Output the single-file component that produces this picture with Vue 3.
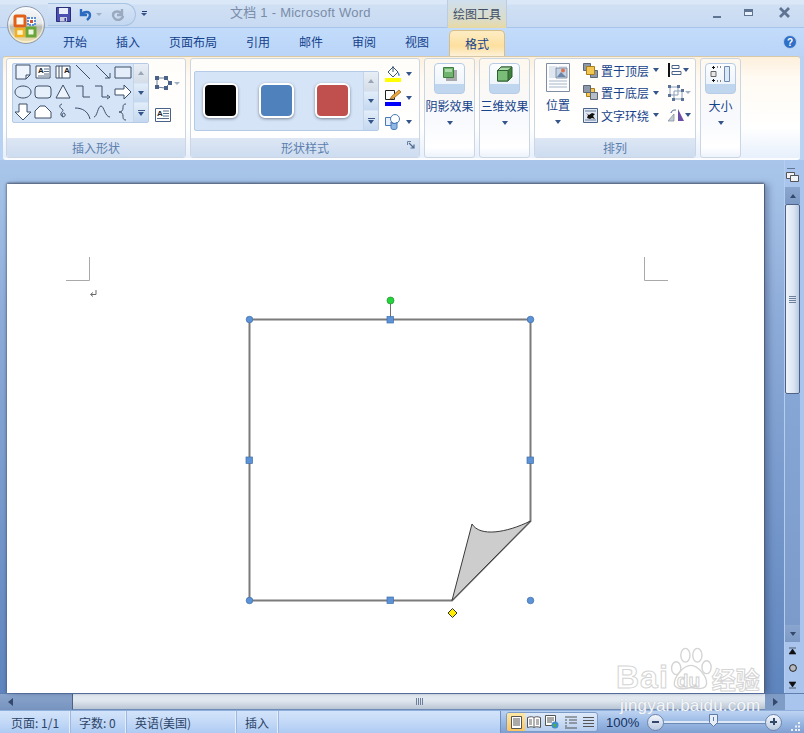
<script setup>
const tabs = ["开始", "插入", "页面布局", "引用", "邮件", "审阅", "视图"];

// shape gallery, drawn on a 20x20 box
const shapes = [
  { d: "M3 3h14v10l-4 4H3z M13 17v-4h4", fill: "#eef4fc" },
  { d: "M3 4h14v12H3z", fill: "#fff", label: "A" },
  { d: "M3 4h14v12H3z M6 4v12 M9 4v12", fill: "#fff", label: "A", labelX: 11 },
  { d: "M3 3l14 14" },
  { d: "M3 3l13 13 M12 16h5v-5", arrow: true },
  { d: "M2 5h16v11H2z", fill: "#e4eefa" },
  { d: "M10 4c4.500 0 8 2.700 8 6s-3.500 6-8 6-8-2.700-8-6 3.500-6 8-6z", fill: "#dce9f8" },
  { d: "M5 4h10q3 0 3 3v6q0 3-3 3H5q-3 0-3-3V7q0-3 3-3z", fill: "#e6f0fb" },
  { d: "M10 3l7 13H3z", fill: "#eef4fc" },
  { d: "M3 4h7v11h7" },
  { d: "M2 4h7v11h6 M14 13l3 2-3 2", arrow: true },
  { d: "M2 7h9V3l7 7-7 7v-4H2z", fill: "#fff" },
  { d: "M6 2h8v8h4l-8 8-8-8h4z", fill: "#fff" },
  { d: "M7 4h5l6 6v6H2v-7z", fill: "#fff" },
  { d: "M9 2c-3 1-3 3 0 5 3 2-2 3-1 6 1 3 5 2 4-1-1-2-4-1-2 3" },
  { d: "M2 6c7 0 13 3 15 11" },
  { d: "M1 15c3 0 4-11 7-11s4 11 9 11" },
  { d: "M13 2c-3 0-3 2-3 4s-1 4-4 4c3 0 4 2 4 4s0 4 3 4" },
];
</script>

<template>
  <div class="app">
    <!-- office button -->
    <svg class="orb" viewBox="0 0 40 40" width="40" height="40">
      <defs>
        <linearGradient id="orbBg" x1="0" y1="0" x2="0" y2="1">
          <stop offset="0" stop-color="#f7f8fa" />
          <stop offset="0.45" stop-color="#e6e8ea" />
          <stop offset="0.55" stop-color="#b9bab2" />
          <stop offset="1" stop-color="#f8e4a8" />
        </linearGradient>
      </defs>
      <circle cx="20" cy="20" r="18.500" fill="url(#orbBg)" stroke="#8f9cb0" />
      <circle cx="20" cy="20" r="17" fill="none" stroke="#fff" stroke-opacity="0.7" />
      <rect x="9" y="11" width="10" height="10" rx="1" fill="#fff8ee" stroke="#e0601a" stroke-width="3" />
      <rect x="22" y="13" width="7" height="7" fill="#fff" stroke="#5a90d8" stroke-width="2" stroke-dasharray="2 1" />
      <rect x="24" y="15" width="3" height="3" fill="#d9503a" />
      <rect x="10" y="24" width="8" height="7" fill="#fff4c8" stroke="#f0b020" stroke-width="2.500" />
      <rect x="21" y="23" width="8" height="8" fill="#eef6e0" stroke="#6aa53a" stroke-width="3" />
    </svg>

    <header class="titlebar">
      <div class="qat">
        <svg width="15" height="15" viewBox="0 0 15 15">
          <path d="M.5.500h14v14H.5z" fill="#4a4fb0" stroke="#2b2d78" />
          <path d="M3 1h9v6H3z" fill="#e8eefc" />
          <path d="M4 10h7v4.500H4z" fill="#c8cce0" />
          <path d="M8.500 11h1.500v3H8.500z" fill="#35388a" />
        </svg>
        <svg class="undo" width="14" height="14" viewBox="0 0 14 14">
          <path d="M3 2v6h6M3.500 7.500C6 4 12 4 12 8c0 2-1 3.500-3 5" fill="none" stroke="#2b6cc0" stroke-width="2.400" />
        </svg>
        <i class="arrow small grey"></i>
        <svg class="redo" width="14" height="14" viewBox="0 0 14 14">
          <path d="M11 2v6H6M10.500 7.500C9 3 2 4 2 8c0 3 3 5 5 5s5-2 5-4" fill="none" stroke="#9aa9bd" stroke-width="2.400" />
        </svg>
      </div>
      <div class="qat-more"><b></b><i class="arrow small navy"></i></div>
      <div class="doc-title">文档 1 - Microsoft Word</div>
      <div class="context-tab">绘图工具</div>
      <div class="winbtns">
        <span class="win-min"></span>
        <span class="win-max"></span>
        <svg class="win-close" width="13" height="11" viewBox="0 0 13 11">
          <path d="M2 1l9 9M11 1l-9 9" stroke="#5f7492" stroke-width="2.800" />
        </svg>
      </div>
    </header>

    <nav class="tabs">
      <span v-for="t in tabs" :key="t" class="tab">{{ t }}</span>
      <span class="tab tab-active">格式</span>
      <svg class="help" width="14" height="14" viewBox="0 0 14 14">
        <circle cx="7" cy="7" r="6.500" fill="#2f6fc8" stroke="#bcd0ea" />
        <text x="7" y="11" text-anchor="middle" class="help-q">?</text>
      </svg>
    </nav>

    <section class="ribbon">
      <div class="group g-insert">
        <div class="group-body">
          <div class="gallery shapes-gal">
            <div class="shape-grid">
              <svg v-for="(s, i) in shapes" :key="i" width="20" height="20" viewBox="0 0 20 20">
                <path :d="s.d" :fill="s.fill || 'none'" stroke="#3c4f68" stroke-width="1" />
                <text v-if="s.label" :x="s.labelX || 5" y="11" class="shape-a">{{ s.label }}</text>
                <path v-if="s.label && !s.labelX" d="M11 7h5M11 9.500h5M11 12h5M5 14h11" stroke="#5a6d88" />
              </svg>
            </div>
            <div class="gal-scroll">
              <span class="up off"><i class="arrow up-arrow"></i></span>
              <span><i class="arrow navy"></i></span>
              <span class="more"><b></b><i class="arrow navy"></i></span>
            </div>
          </div>
          <div class="side-col">
            <span class="edit-shape">
              <svg width="17" height="16" viewBox="0 0 17 16">
                <path d="M2 3l9 0 4 5-5 5-8-1z" fill="none" stroke="#6d7f99" />
                <path d="M0 1h4v4H0zM9 1h4v4H9zM9 11h4v4H9zM0 10h4v4H0zM13 6h4v4h-4z" fill="#4a6288" />
              </svg>
              <i class="arrow small grey"></i>
            </span>
            <svg width="16" height="14" viewBox="0 0 16 14">
              <path d="M.500.500h15v13H.500z" fill="#fff" stroke="#4a6288" />
              <text x="2" y="8" class="shape-a">A</text>
              <path d="M8 3h6M8 5.500h6M8 8h6M2 10.500h12" stroke="#5a6d88" />
            </svg>
          </div>
        </div>
        <div class="group-label">插入形状</div>
      </div>

      <div class="group g-style">
        <div class="group-body">
          <div class="gallery style-gal">
            <div class="swatches">
              <span class="swatch black"></span>
              <span class="swatch blue"></span>
              <span class="swatch red"></span>
            </div>
            <div class="gal-scroll">
              <span class="up off"><i class="arrow up-arrow"></i></span>
              <span><i class="arrow navy"></i></span>
              <span class="more"><b></b><i class="arrow navy"></i></span>
            </div>
          </div>
          <div class="style-tools">
            <div class="tool">
              <svg width="16" height="17" viewBox="0 0 16 17">
                <path d="M3 7l5-5 5 5-5 5z" fill="#fff" stroke="#3d5675" />
                <path d="M8 1v6" stroke="#3d5675" />
                <path d="M13 7c2 2 2 4 1 4s-1-2-1-4z" fill="#3b77c9" />
                <path d="M0 13h16v4H0z" fill="#ffff00" />
              </svg>
              <i class="arrow navy"></i>
            </div>
            <div class="tool">
              <svg width="16" height="17" viewBox="0 0 16 17">
                <path d="M.500 1.500h9v9h-9z" fill="#fff" stroke="#222" />
                <path d="M5 10l2-3 7-6 2 2-7 6z" fill="#eba83a" stroke="#8a5a14" stroke-width="0.700" />
                <path d="M0 13h16v4H0z" fill="#0000ff" />
              </svg>
              <i class="arrow navy"></i>
            </div>
            <div class="tool">
              <svg width="16" height="16" viewBox="0 0 16 16">
                <path d="M.500 3.500h8v8h-8z" fill="#e8f0fb" stroke="#4a7ab5" />
                <circle cx="10" cy="5" r="4.500" fill="#fff" stroke="#4a7ab5" />
                <path d="M6 8v6c0 2 6 2 6 0V8c0 2-6 2-6 0z" fill="#8fb8e6" stroke="#4a7ab5" />
              </svg>
              <i class="arrow navy"></i>
            </div>
          </div>
        </div>
        <div class="group-label">
          形状样式
          <svg class="launcher" width="8" height="8" viewBox="0 0 8 8">
            <path d="M.500 4V.500H4" fill="none" stroke="#6a829f" />
            <path d="M2 2l5 5M7 3.500V7H3.500" fill="none" stroke="#4d6a8f" stroke-width="1.200" />
          </svg>
        </div>
      </div>

      <div class="group g-tall">
        <div class="big-btn">
          <div class="big-icon">
            <svg width="14" height="14" viewBox="0 0 14 14">
              <path d="M3 3h11v11H3z" fill="#777" opacity="0.6" />
              <path d="M.500.500h10v10H.500z" fill="#6fb36f" stroke="#3e7d3e" />
              <path d="M2 2h7v3H2z" fill="#a9d8a9" />
            </svg>
          </div>
        </div>
        <span class="big-label">阴影效果</span>
        <i class="arrow navy"></i>
      </div>

      <div class="group g-tall">
        <div class="big-btn">
          <div class="big-icon">
            <svg width="16" height="16" viewBox="0 0 16 16">
              <path d="M.500 4.500L4 1h11v10l-4 4H.500z" fill="#3f7f3f" stroke="#2e5f2e" />
              <path d="M.500 4.500h10.500V15H.500z" fill="#79bd79" stroke="#2e5f2e" />
              <path d="M.500 4.500L4 1h11l-4 3.500z" fill="#a9d8a9" stroke="#2e5f2e" />
            </svg>
          </div>
        </div>
        <span class="big-label">三维效果</span>
        <i class="arrow navy"></i>
      </div>

      <div class="group g-arrange">
        <div class="group-body arrange-body">
          <div class="pos-col">
            <svg width="24" height="29" viewBox="0 0 24 29">
              <path d="M.500.500h23v28H.500z" fill="#fdfdff" stroke="#7f8ea3" />
              <path d="M3 18h18M3 21h18M3 24h18" stroke="#a8b5c6" />
              <path d="M3 3h8v12H3z M13 3h8v2h-8z M13 7h8v2h-8z" fill="#dfe6ef" />
              <path d="M10 5h11v10H10z" fill="#c3d3e6" stroke="#6f7f96" stroke-width="0.800" />
              <path d="M11 14l4-5 5 5z" fill="#6c84a6" />
              <circle cx="17" cy="7.500" r="2" fill="#e0704c" />
            </svg>
            <span class="big-label">位置</span>
            <i class="arrow navy"></i>
          </div>
          <div class="arr-col">
            <div class="arr-row">
              <svg width="15" height="15" viewBox="0 0 15 15">
                <path d="M.500.500h7v7h-7z" fill="#8d99a8" stroke="#5c6775" />
                <path d="M7.500 7.500h7v7h-7z" fill="#8d99a8" stroke="#5c6775" />
                <path d="M3.500 3.500h8v8h-8z" fill="#f3c652" stroke="#a87d1a" />
              </svg>
              <span>置于顶层</span><i class="arrow navy"></i>
            </div>
            <div class="arr-row">
              <svg width="15" height="15" viewBox="0 0 15 15">
                <path d="M3.500 3.500h8v8h-8z" fill="#f3c652" stroke="#a87d1a" />
                <path d="M.500.500h7v7h-7z" fill="#8d99a8" stroke="#5c6775" />
                <path d="M7.500 7.500h7v7h-7z" fill="#b4bdc8" stroke="#5c6775" />
              </svg>
              <span>置于底层</span><i class="arrow navy"></i>
            </div>
            <div class="arr-row">
              <svg width="15" height="15" viewBox="0 0 15 15">
                <path d="M.500.500h14v14H.500z" fill="#dfe8f3" stroke="#4a6288" />
                <path d="M2 3h11M2 12h11" stroke="#6a7f9c" />
                <path d="M3 5l3 2 3-2 3 1-2 2 2 3-3-1-2 1-3-1 1-3z" fill="#111" />
              </svg>
              <span>文字环绕</span><i class="arrow navy"></i>
            </div>
          </div>
          <div class="arr-tools">
            <div class="arr-row">
              <svg width="14" height="14" viewBox="0 0 14 14">
                <path d="M1 0v14" stroke="#111" stroke-width="2" />
                <path d="M4 2.500h7v3H4zM4 8.500h9v3H4z" fill="#fff" stroke="#4a6288" />
              </svg>
              <i class="arrow navy"></i>
            </div>
            <div class="arr-row">
              <svg width="16" height="16" viewBox="0 0 16 16">
                <path d="M2 2h8v8H2zM6 6h8v8H6z" fill="none" stroke="#8ba0bb" />
                <path d="M0 0h3v3H0zM9 0h3v3H9zM0 9h3v3H0zM13 4h3v3h-3zM13 13h3v3h-3zM4 13h3v3H4z" fill="#5a7396" />
              </svg>
              <i class="arrow small grey"></i>
            </div>
            <div class="arr-row">
              <svg width="16" height="14" viewBox="0 0 16 14">
                <path d="M0 13L6 6v7z" fill="#c6ccd4" stroke="#7d8897" stroke-width="0.700" />
                <path d="M10 1v12h6z" fill="#6b4ea5" />
                <path d="M3 5c1-3 3-3 5-3" fill="none" stroke="#3f5f8f" />
              </svg>
              <i class="arrow navy"></i>
            </div>
          </div>
        </div>
        <div class="group-label">排列</div>
      </div>

      <div class="group g-tall g-size">
        <div class="big-btn">
          <div class="big-icon">
            <svg width="22" height="16" viewBox="0 0 22 16">
              <path d="M14.500.500h5v15h-5z" fill="#dbe9f8" stroke="#6f8cb0" />
              <path d="M1 5.500h5v5H1z" fill="#e7e7e7" stroke="#666" />
              <path d="M3.500 0v3M2 1.500h3M3.500 13v3M2 14.500h3" stroke="#111" />
              <path d="M7 1h5M7 15h5" stroke="#111" stroke-dasharray="1 2" />
            </svg>
          </div>
        </div>
        <span class="big-label">大小</span>
        <i class="arrow navy"></i>
      </div>
    </section>

    <main class="workspace">
      <div class="page">
        <svg class="canvas" viewBox="7 184 757 509" width="757" height="509">
          <path d="M66 280.500h23.500V257M644.500 257v23.500H668" fill="none" stroke="#a9a9a9" />
          <path d="M96 290v4.500h-5M93 292.500l-2.500 2 2.500 2" fill="none" stroke="#6a6a6a" />

          <path d="M249.500 319.500H530.500V521L452 600.500H249.500z" fill="#fff" stroke="#7b7b7b" stroke-width="2" />
          <path d="M452 600.500L472 524C480 537 506 533 530.500 521z" fill="#cdcdcd" stroke="#3a3a3a" />

          <path d="M390.500 300v19" stroke="#6f6f6f" />
          <circle cx="390.500" cy="300.500" r="3.500" fill="#22d63a" stroke="#2a8a3a" stroke-width="0.700" />
          <g fill="#5c92d8" stroke="#3f6fa8" stroke-width="0.700">
            <circle cx="249.500" cy="319.500" r="3.300" />
            <circle cx="530.500" cy="319.500" r="3.300" />
            <circle cx="249.500" cy="600.500" r="3.300" />
            <circle cx="530.500" cy="600.500" r="3.300" />
            <rect x="387" y="316.500" width="6.500" height="6.500" />
            <rect x="387" y="597" width="6.500" height="6.500" />
            <rect x="246" y="457" width="6.500" height="6.500" />
            <rect x="527" y="457" width="6.500" height="6.500" />
          </g>
          <path d="M452.500 608.500l4.500 4.500-4.500 4.500-4.500-4.500z" fill="#ffee00" stroke="#333" />
        </svg>
      </div>
      <aside class="vscroll">
        <svg class="ruler" width="13" height="15" viewBox="0 0 13 15">
          <path d="M1 0h8" stroke="#3f5676" stroke-width="1.400" />
          <path d="M.500 4.500h8v6h-8z" fill="#f1f3f6" stroke="#555" />
          <path d="M4.500 7.500h8v6h-8z" fill="#f1f3f6" stroke="#555" />
        </svg>
        <span class="vbtn"><i class="arrow up-arrow dark"></i></span>
        <div class="vthumb"><b></b></div>
        <div class="vtrack"></div>
        <span class="vbtn"><i class="arrow dark"></i></span>
        <div class="vnav">
          <svg width="7" height="8" viewBox="0 0 7 8"><path d="M0 1h7M3.500 2L0 7h7z" fill="#111" stroke="#111" stroke-width="0.600" /></svg>
          <svg width="8" height="8" viewBox="0 0 8 8"><circle cx="4" cy="4" r="3.400" fill="#b5b8bd" stroke="#222" /></svg>
          <svg width="7" height="8" viewBox="0 0 7 8"><path d="M0 7h7M3.500 6L0 1h7z" fill="#111" stroke="#111" stroke-width="0.600" /></svg>
        </div>
      </aside>
    </main>

    <div class="hscroll">
      <span class="hbtn"><i class="arrow left-arrow"></i></span>
      <div class="hthumb"><b></b></div>
      <span class="hbtn-r"><i class="arrow right-arrow"></i></span>
      <span class="hcorner"></span>
    </div>

    <footer class="statusbar">
      <span class="st st-page">页面: 1/1</span>
      <span class="st st-words">字数: 0</span>
      <span class="st st-lang">英语(美国)</span>
      <span class="st st-mode">插入</span>
      <span class="st-fill"></span>
      <div class="st-right">
        <div class="views">
          <span class="view on">
            <svg width="13" height="13" viewBox="0 0 13 13"><path d="M1.500.500h10v12h-10z" fill="#fff" stroke="#555" /><path d="M3 3h7M3 5h7M3 7h7M3 9h7" stroke="#555" /></svg>
          </span>
          <span class="view">
            <svg width="14" height="13" viewBox="0 0 14 13"><path d="M.500 1.500c3-1 5-1 6.500 0 1.500-1 3.500-1 6.500 0v10c-3-1-5-1-6.500 0-1.500-1-3.500-1-6.500 0z" fill="#fff" stroke="#555" /><path d="M7 2v9M2 4h3M2 6h3M2 8h3M9 4h3M9 6h3M9 8h3" stroke="#666" /></svg>
          </span>
          <span class="view">
            <svg width="14" height="14" viewBox="0 0 14 14"><path d="M.500.500h10v10H.500z" fill="#fff" stroke="#555" /><path d="M2 3h7M2 5h7M2 7h5" stroke="#555" /><circle cx="10" cy="10" r="3.500" fill="#3f8fce" /><path d="M8 9h3v3H9z" fill="#4fae4f" /></svg>
          </span>
          <span class="view">
            <svg width="13" height="13" viewBox="0 0 13 13"><path d="M1 1h12M5 4h8M5 7h8M1 10h2M1 7h2M1 4h2M1 12h12" stroke="#555" /></svg>
          </span>
          <span class="view">
            <svg width="13" height="13" viewBox="0 0 13 13"><path d="M1 1.500h11M1 4.500h11M1 7.500h11M1 10.500h11" stroke="#555" /></svg>
          </span>
        </div>
        <span class="zoom-val">100%</span>
        <span class="zoom-btn"><b></b></span>
        <div class="slider">
          <svg class="knob" width="9" height="13" viewBox="0 0 9 13">
            <path d="M.500.500h8v8l-4 4-4-4z" fill="#e8eef7" stroke="#5f7ba6" />
            <path d="M4.500 3v4" stroke="#5f7ba6" />
          </svg>
        </div>
        <span class="zoom-btn plus"><b></b></span>
        <svg class="grip" width="11" height="11" viewBox="0 0 11 11">
          <path d="M8 1h2v2H8zM5 4.500h2v2H5zM8 4.500h2v2H8zM1 8h2v2H1zM5 8h2v2H5zM8 8h2v2H8z" fill="#eaf1fb" />
        </svg>
      </div>
    </footer>

    <!-- baidu watermark -->
    <div class="watermark">
      <div class="wm-top">
        <span class="wm-bai">Bai</span>
        <span class="wm-paw">
          <svg width="46" height="46" viewBox="0 0 50 50">
            <g fill="rgba(255,255,255,.5)" stroke="#d4d4d4" stroke-width="1.500">
              <ellipse cx="10" cy="23" rx="5" ry="7" />
              <ellipse cx="20" cy="9" rx="5" ry="7.500" />
              <ellipse cx="33" cy="9" rx="5" ry="7.500" />
              <ellipse cx="43" cy="22" rx="5" ry="7" />
              <path d="M26 20c8 0 18 13 17 20-1 6-9 6-17 4-8 2-16 2-18-3-1-7 9-21 18-21z" />
            </g>
          </svg>
          <span class="wm-du">du</span>
        </span>
        <span class="wm-cn">经验</span>
      </div>
      <div class="wm-url">jingyan.baidu.com</div>
    </div>
  </div>
</template>

<style scoped>
.app {
  position: relative;
  width: 804px;
  height: 733px;
  overflow: hidden;
  display: flex;
  flex-direction: column;
  background: #b8d2f4;
  font-family: "Noto Sans CJK SC", "Liberation Sans", sans-serif;
  font-size: 12px;
  color: #15428b;
}

.orb {
  position: absolute;
  left: 6px;
  top: 5px;
  z-index: 5;
}

/* title bar */
.titlebar {
  height: 28px;
  box-sizing: border-box;
  flex: none;
  display: flex;
  align-items: center;
  padding-left: 48px;
  border-bottom: 1px solid #a7c5ea;
  background: linear-gradient(#dbe8f7 0, #dbe8f7 4px, #d0e0f4 5px, #c7daf2 100%);
}

.qat {
  width: 88px;
  height: 23px;
  margin-top: 1px;
  box-sizing: border-box;
  display: flex;
  align-items: center;
  gap: 4px;
  padding-left: 8px;
  border: 1px solid #a9c3e3;
  border-left: none;
  border-radius: 0 12px 12px 0;
  background: linear-gradient(#d6e4f6, #c2d7f1);
}

.undo {
  margin-left: 3px;
}

.redo {
  margin-left: 5px;
}

.qat-more {
  margin-left: 5px;
  display: flex;
  flex-direction: column;
  align-items: center;
  gap: 1px;
}

.qat-more b {
  width: 5px;
  height: 1px;
  background: #1f3c6e;
}

.doc-title {
  width: 240px;
  margin-left: 83px;
  font-size: 13px;
  letter-spacing: 0.25px;
  color: #7a8ca8;
  font-family: "Liberation Sans", "Noto Sans CJK SC", sans-serif;
  margin-top: -4px;
  white-space: nowrap;
}

.context-tab {
  width: 60px;
  height: 28px;
  margin: 0 0 -1px -23px;
  flex: none;
  box-sizing: border-box;
  padding-top: 5px;
  text-align: center;
  color: #3f4f66;
  border-left: 1px solid #bccde2;
  border-right: 1px solid #bccde2;
  background: linear-gradient(#cfdfee, #dcdcc8 70%, #e8d9a2);
}

.winbtns {
  margin-left: 206px;
  display: flex;
  align-items: center;
  gap: 23px;
  margin-top: -2px;
}

.win-min {
  width: 8px;
  height: 2px;
  margin-top: 8px;
  background: #5f7492;
}

.win-max {
  width: 9px;
  height: 7px;
  box-sizing: border-box;
  border: 1px solid #5f7492;
  border-top-width: 3px;
  background: #e8f0fa;
}

.win-close {
  margin-left: 2px;
}

/* tabs */
.tabs {
  height: 28px;
  flex: none;
  display: flex;
  align-items: center;
  gap: 29px;
  padding-left: 63px;
  position: relative;
  background: linear-gradient(#c3dcfb, #b9d4f8);
}

.tab {
  line-height: 28px;
}

.tab-active {
  margin-left: -9px;
  width: 56px;
  height: 26px;
  margin-top: 2px;
  box-sizing: border-box;
  text-align: center;
  line-height: 25px;
  border: 1px solid #d9bd86;
  border-bottom: none;
  border-radius: 5px 5px 0 0;
  background: linear-gradient(#fdedc4, #fddf9f 60%, #fdf1d7);
}

.help {
  position: absolute;
  right: 7px;
  top: 7px;
}

.help-q {
  font: bold 10px "Liberation Sans", sans-serif;
  fill: #fff;
}

/* ribbon */
.ribbon {
  height: 104px;
  flex: none;
  box-sizing: border-box;
  margin: 0 4px 0 3px;
  padding: 1px 3px 0;
  display: flex;
  gap: 4px;
  border-top: 1px solid #d8c9a6;
  border-bottom: 2px solid #fafcff;
  border-radius: 3px;
  background: linear-gradient(#fdf0dc, #fffaf2 20%, #fff 70%, #e7f0fc);
}

.group {
  box-sizing: border-box;
  height: 100px;
  flex: none;
  display: flex;
  flex-direction: column;
  border: 1px solid #ccd6e2;
  border-radius: 3px;
  background: linear-gradient(#fffdf9 0, #fff 80%, #fff);
}

.group-body {
  flex: 1;
  min-height: 0;
  display: flex;
}

.group-label {
  position: relative;
  height: 19px;
  flex: none;
  text-align: center;
  line-height: 19px;
  color: #5c7fae;
  background: linear-gradient(#dde7f5, #cddcf0);
  border-radius: 0 0 2px 2px;
}

.launcher {
  position: absolute;
  right: 4px;
  top: 3px;
}

.g-insert {
  width: 180px;
}

.g-insert .group-body {
  padding: 4px 0 0 5px;
}

.gallery {
  box-sizing: border-box;
  display: flex;
  height: 60px;
  flex: none;
  border: 1px solid #b4cae6;
  border-radius: 2px;
  background: #d5e4f7;
}

.shapes-gal {
  width: 137px;
}

.shape-grid {
  flex: 1;
  margin-top: -2px;
  display: grid;
  grid-template-columns: repeat(6, 20px);
  grid-auto-rows: 20px;
}

.shape-a {
  font: bold 8px "Liberation Sans", sans-serif;
  fill: #222;
}

.gal-scroll {
  width: 14px;
  flex: none;
  display: flex;
  flex-direction: column;
  gap: 1px;
  border-left: 1px solid #c4d5ea;
}

.gal-scroll span {
  flex: 1;
  display: flex;
  flex-direction: column;
  align-items: center;
  justify-content: center;
  gap: 1px;
  background: linear-gradient(#e2edf9, #c4d8f0);
}

.gal-scroll .off {
  background: linear-gradient(#e8eef5, #d4dde8);
}

.gal-scroll b {
  width: 7px;
  height: 1px;
  background: #3c5a8a;
}

.side-col {
  margin: 12px 0 0 6px;
  display: flex;
  flex-direction: column;
  align-items: flex-start;
  gap: 17px;
}

.edit-shape {
  display: flex;
  align-items: center;
  gap: 2px;
}

.g-style {
  width: 230px;
}

.g-style .group-body {
  padding: 12px 0 0 3px;
}

.style-gal {
  width: 185px;
}

.swatches {
  flex: 1;
  display: flex;
  gap: 21px;
  padding: 11px 0 0 8px;
}

.swatch {
  width: 35px;
  height: 35px;
  box-sizing: border-box;
  border: 2px solid #fff;
  border-radius: 6px;
  box-shadow: 0 1px 3px rgba(60, 70, 90, 0.6);
}

.black {
  background: #000;
}

.blue {
  background: #4f81bd;
}

.red {
  background: #c0504d;
}

.style-tools {
  margin: -6px 0 0 6px;
  display: flex;
  flex-direction: column;
  gap: 7px;
}

.tool {
  display: flex;
  align-items: center;
  gap: 5px;
  height: 17px;
}

.g-tall {
  width: 51px;
  align-items: center;
  background: linear-gradient(#fef8ee, #f7f9fd 60%, #fff 90%, #edf3fc);
}

.big-btn {
  margin-top: 4px;
  width: 31px;
  height: 31px;
  box-sizing: border-box;
  border: 1px solid #b6cce6;
  border-radius: 4px;
  overflow: hidden;
  background: linear-gradient(#fbfdff 0, #eef4fb 70%, #c0d5ee 70%, #c0d5ee 100%);
}

.big-icon {
  height: 20px;
  display: flex;
  align-items: center;
  justify-content: center;
}

.big-label {
  margin-top: 3px;
  line-height: 18px;
  white-space: nowrap;
}

.g-tall .arrow,
.pos-col .arrow {
  margin-top: 6px;
}

.g-arrange {
  width: 162px;
}

.arrange-body {
  padding: 4px 0 0 0;
}

.pos-col {
  width: 46px;
  flex: none;
  display: flex;
  flex-direction: column;
  align-items: center;
}

.pos-col .big-label {
  margin-top: 4px;
}

.arr-col {
  margin: -2px 0 0 2px;
  width: 84px;
  flex: none;
  display: flex;
  flex-direction: column;
  gap: 4.500px;
}

.arr-row {
  height: 18px;
  display: flex;
  align-items: center;
  gap: 3px;
}

.arr-col .arrow {
  margin-left: 1px;
}

.arr-tools {
  margin: -2px 0 0 1px;
  display: flex;
  flex-direction: column;
  gap: 4.500px;
}

.arr-tools .arr-row {
  gap: 1px;
}

.g-size {
  width: 41px;
}

/* small triangles */
.arrow {
  display: inline-block;
  width: 0;
  height: 0;
  flex: none;
  border-left: 3.500px solid transparent;
  border-right: 3.500px solid transparent;
  border-top: 4px solid #3c5a8a;
}

.arrow.small {
  border-left-width: 3px;
  border-right-width: 3px;
  border-top-width: 3px;
}

.arrow.grey {
  border-top-color: #9fb0c6;
}

.arrow.navy {
  border-top-color: #34558a;
}

.up-arrow {
  border-top: none;
  border-bottom: 4px solid #9aa6b5;
}

.up-arrow.dark {
  border-bottom-color: #34496b;
}

.arrow.dark {
  border-top-color: #34496b;
}

.left-arrow {
  border: none;
  border-top: 4px solid transparent;
  border-bottom: 4px solid transparent;
  border-right: 5px solid #34496b;
}

.right-arrow {
  border: none;
  border-top: 4px solid transparent;
  border-bottom: 4px solid transparent;
  border-left: 5px solid #34496b;
}

/* document */
.workspace {
  flex: 1;
  min-height: 0;
  display: flex;
  padding-left: 7px;
  background: linear-gradient(#a9c6ea 0, #8dabd8 30%, #5f85be 100%);
  position: relative;
}

.page {
  margin-top: 24px;
  width: 757px;
  height: 509px;
  flex: none;
  background: #fff;
  box-shadow: 0 -1px 2px #4f5a70, 1px 0 0 #55617a, 5px 0 6px rgba(40, 60, 100, 0.35), -1px 0 3px rgba(40, 60, 100, 0.25);
}

.canvas {
  display: block;
}

.vscroll {
  margin-left: 20px;
  width: 20px;
  flex: none;
  box-sizing: border-box;
  padding-right: 4px;
  display: flex;
  flex-direction: column;
  align-items: stretch;
  border-left: 1px solid #b4cdf0;
  background: #a9c5ee;
}

.ruler {
  margin: 8px 0 4px 1px;
  flex: none;
}

.vbtn {
  height: 17px;
  flex: none;
  display: flex;
  align-items: center;
  justify-content: center;
  background: linear-gradient(#8aa6cf, #7d9ac6);
}

.vthumb {
  height: 190px;
  flex: none;
  box-sizing: border-box;
  display: flex;
  align-items: center;
  justify-content: center;
  border: 1px solid #4d6285;
  border-radius: 2px;
  background: linear-gradient(90deg, #eef3fa, #dbe5f2 60%, #b8c9e0);
}

.vthumb b {
  width: 7px;
  height: 7px;
  background: repeating-linear-gradient(#6d7f9a 0 1px, transparent 1px 2px);
}

.vtrack {
  flex: 1;
  background: linear-gradient(#86a6d6, #7c9bca);
}

.vnav {
  height: 51px;
  flex: none;
  display: flex;
  flex-direction: column;
  align-items: center;
  justify-content: center;
  gap: 9px;
}

.hscroll {
  height: 17px;
  flex: none;
  display: flex;
  align-items: stretch;
  border-top: 1px solid #5f7fb0;
  box-sizing: border-box;
  background: #7f9cc6;
}

.hbtn {
  width: 72px;
  flex: none;
  display: flex;
  align-items: center;
  padding-left: 8px;
  box-sizing: border-box;
  background: linear-gradient(#8aa5cc, #7693bf);
}

.hthumb {
  flex: 1;
  display: flex;
  align-items: center;
  justify-content: center;
  background: linear-gradient(#f0f4f9, #dfe6ee 45%, #b9c5d4);
  border-left: 1px solid #4d6285;
  border-bottom: 1px solid #6f8bb5;
}

.hthumb b {
  width: 7px;
  height: 7px;
  background: repeating-linear-gradient(90deg, #6d7f9a 0 1px, transparent 1px 2px);
}

.hbtn-r {
  width: 20px;
  flex: none;
  display: flex;
  align-items: center;
  justify-content: center;
  background: #7f9cc6;
}

.hcorner {
  width: 19px;
  flex: none;
  background: #a9c5ee;
}

/* status bar */
.statusbar {
  height: 23px;
  flex: none;
  box-sizing: border-box;
  display: flex;
  align-items: stretch;
  color: #2d4468;
  border-top: 1px solid #8eaedb;
  background: linear-gradient(#d3e4fa, #c5daf7 45%, #aecbf3);
}

.st {
  box-sizing: border-box;
  display: flex;
  align-items: center;
  padding-left: 11px;
  border-right: 1px solid #e4eefb;
  box-shadow: 1px 0 0 #9fb9de;
  white-space: nowrap;
}

.st-page {
  width: 70px;
}

.st-words {
  width: 56px;
  padding-left: 9px;
}

.st-lang {
  width: 110px;
  padding-left: 9px;
}

.st-mode {
  width: 42px;
  padding-left: 9px;
}

.st-fill {
  width: 222px;
  flex: none;
}

.st-right {
  flex: 1;
  display: flex;
  align-items: center;
  padding-left: 5px;
  background: linear-gradient(#bdd3f2, #9ab9e4 50%, #7f9fd1);
  border-left: 1px solid #6f8fc0;
}

.views {
  height: 18px;
  display: flex;
  border: 1px solid #7d9bc8;
  border-radius: 3px;
  overflow: hidden;
  background: linear-gradient(#dfeafa, #b6cdee);
}

.view {
  width: 18px;
  display: flex;
  align-items: center;
  justify-content: center;
}

.view.on {
  background: linear-gradient(#fee9a6, #fbc55f);
}

.zoom-val {
  margin-left: 8px;
  font: 13px "Liberation Sans", sans-serif;
  color: #15305f;
}

.zoom-btn {
  position: relative;
  margin-left: 8px;
  width: 17px;
  height: 17px;
  flex: none;
  box-sizing: border-box;
  border: 1px solid #6d86ad;
  border-radius: 50%;
  background: linear-gradient(#f4f7fc, #b9c9e0);
}

.zoom-btn b {
  position: absolute;
  left: 4px;
  top: 6px;
  width: 7px;
  height: 2px;
  background: #33476b;
}

.plus {
  margin-left: 0;
}

.plus::after {
  content: "";
  position: absolute;
  left: 6.500px;
  top: 3.500px;
  width: 2px;
  height: 7px;
  background: #33476b;
}

.slider {
  position: relative;
  width: 101px;
  height: 2px;
  flex: none;
  background: #dde8f7;
  box-shadow: 0 1px 0 #6d8ab6;
}

.knob {
  position: absolute;
  left: 45px;
  top: -7px;
}

.grip {
  margin-left: 8px;
  align-self: flex-end;
  margin-bottom: 1px;
}

/* watermark */
.watermark {
  position: absolute;
  left: 616px;
  top: 643px;
  width: 150px;
  z-index: 6;
  pointer-events: none;
}

.wm-top {
  display: flex;
  align-items: flex-end;
  height: 54px;
}

.wm-bai {
  font: bold 32px/40px "Liberation Sans", sans-serif;
  color: rgba(255, 255, 255, 0.6);
  -webkit-text-stroke: 1px #d4d4d4;
  letter-spacing: 1px;
}

.wm-paw {
  position: relative;
  width: 46px;
  height: 46px;
  margin: 0 0 4px -2px;
  flex: none;
}

.wm-du {
  position: absolute;
  left: 10px;
  top: 22px;
  font: bold 19px/24px "Liberation Sans", sans-serif;
  color: rgba(255, 255, 255, 0.7);
  -webkit-text-stroke: 1px #d0d0d0;
}

.wm-cn {
  margin-left: -1px;
  font: bold 24px/36px "Noto Sans CJK SC", sans-serif;
  color: rgba(255, 255, 255, 0.6);
  -webkit-text-stroke: 1px #d4d4d4;
  white-space: nowrap;
}

.wm-url {
  margin-top: -1px;
  padding-left: 4px;
  font: 17px/20px "Liberation Sans", sans-serif;
  letter-spacing: 0.2px;
  color: rgba(255, 255, 255, 0.9);
  text-shadow: 0 0 1px #a8b4c6;
  white-space: nowrap;
}
</style>
